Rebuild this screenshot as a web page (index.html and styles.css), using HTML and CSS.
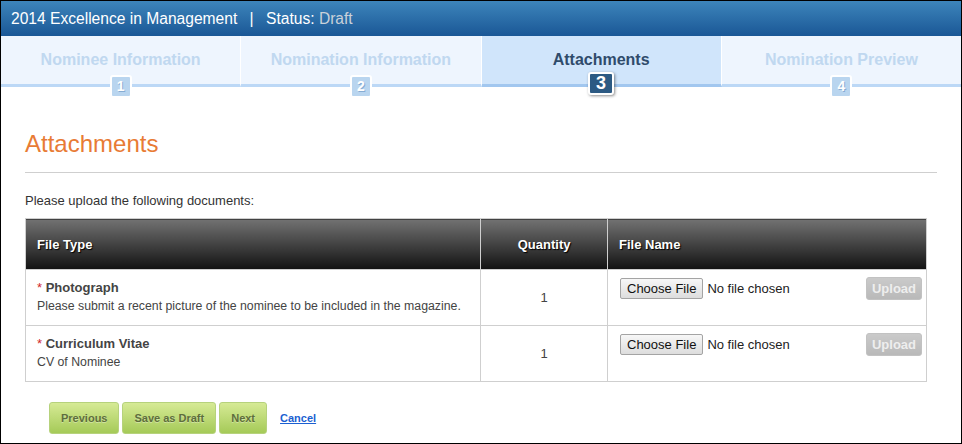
FILE: index.html
```html
<!DOCTYPE html>
<html>
  <head>
    <meta charset="utf-8" />
    <title>2014 Excellence in Management - Attachments</title>
    <link rel="stylesheet" href="styles.css">
  </head>
  <body>
    <div class="page">
      <div class="topbar">
        2014 Excellence in Management <span class="sep">|</span> Status: <span class="draft">Draft</span>
      </div>
      <div class="steps">
        <div class="step">Nominee Information<span class="num">1</span></div>
        <div class="step">Nomination Information<span class="num">2</span></div>
        <div class="step active">Attachments<span class="num">3</span></div>
        <div class="step">Nomination Preview<span class="num">4</span></div>
      </div>
      <div class="content">
        <h1>Attachments</h1>
        <p class="intro">Please upload the following documents:</p>
        <table class="files">
          <tr class="head">
            <th class="col-type">File Type</th>
            <th class="col-qty">Quantity</th>
            <th class="col-name">File Name</th>
          </tr>
          <tr>
            <td class="col-type">
              <div class="doc"><span class="req">*</span> Photograph</div>
              <div class="desc">Please submit a recent picture of the nominee to be included in the magazine.</div>
            </td>
            <td class="col-qty">1</td>
            <td class="col-name">
              <div class="upload-row">
                <input type="file" />
                <button class="upload" disabled>Upload</button>
              </div>
            </td>
          </tr>
          <tr>
            <td class="col-type">
              <div class="doc"><span class="req">*</span> Curriculum Vitae</div>
              <div class="desc">CV of Nominee</div>
            </td>
            <td class="col-qty">1</td>
            <td class="col-name">
              <div class="upload-row">
                <input type="file" />
                <button class="upload" disabled>Upload</button>
              </div>
            </td>
          </tr>
        </table>
        <div class="actions">
          <button class="btn">Previous</button>
          <button class="btn">Save as Draft</button>
          <button class="btn">Next</button>
          <a href="#" class="cancel">Cancel</a>
        </div>
      </div>
    </div>
  </body>
</html>
```

FILE: styles.css
```css
body {
  margin: 0;
  font-family: "Liberation Sans", Arial, sans-serif;
  background: #fff;
}
.page {
  width: 962px;
  height: 444px;
  box-sizing: border-box;
  border: 1px solid #000;
  overflow: hidden;
}
.topbar {
  height: 35px;
  line-height: 35px;
  padding-left: 10px;
  color: #fff;
  font-size: 15.6px;
  background: linear-gradient(#3d85bb, #1a5796);
}
.topbar .sep {
  margin: 0 8px;
}
.topbar .draft {
  color: #c9d1da;
}
.steps {
  display: flex;
}
.step {
  position: relative;
  flex: 1;
  height: 34px;
  padding-top: 14px;
  text-align: center;
  font-size: 16px;
  font-weight: bold;
  line-height: 20px;
  color: #c0d8f0;
  background: #eef5fe;
  border-right: 1px solid #fff;
  border-bottom: 3px solid #bcd8f6;
}
.step:last-child {
  border-right: none;
}
.step.active {
  color: #2f4b6b;
  background: #d0e5fb;
  border-bottom-color: #a2c7ef;
}
.num {
  position: absolute;
  top: 39px;
  left: 50%;
  margin-left: -11px;
  width: 18px;
  height: 19px;
  border: 2px solid #fff;
  border-radius: 3px;
  background: #b9d5ef;
  color: #fff;
  font-size: 14px;
  line-height: 19px;
  text-shadow: 1px 1px 0 #86acd3;
}
.step.active .num {
  top: 36px;
  margin-left: -13px;
  width: 22px;
  background: #2c5a83;
  font-size: 18px;
  text-shadow: none;
  box-shadow: 1px 1px 3px rgba(0, 0, 0, 0.45);
}
.content {
  padding: 0 24px;
}
h1 {
  margin: 43px 0 0;
  padding-bottom: 14px;
  border-bottom: 1px solid #cfcfcf;
  font-size: 24px;
  line-height: 28px;
  font-weight: normal;
  color: #e87b35;
}
.intro {
  margin: 20px 0 10px;
  font-size: 13px;
  line-height: 15px;
  color: #333;
}
.files {
  width: 902px;
  border-collapse: collapse;
  font-size: 13px;
  color: #444;
}
.files tr {
  height: 56px;
}
.files tr.head {
  height: 51px;
}
.files th {
  padding: 0 11px;
  text-align: left;
  color: #fff;
  font-weight: bold;
  text-shadow: 1px 1px 1px #000;
  background: linear-gradient(#727272, #121212);
  border: 1px solid #cfcfcf;
  border-bottom: none;
}
.files td {
  padding: 0 11px;
  border: 1px solid #cfcfcf;
  vertical-align: top;
}
.files th.col-qty,
.files td.col-qty {
  text-align: center;
  vertical-align: middle;
}
.col-type {
  width: 434px;
}
.col-qty {
  width: 104px;
}
.doc {
  margin-top: 10px;
  font-weight: bold;
  line-height: 16px;
}
.req {
  color: #d0272b;
  font-weight: normal;
}
.desc {
  margin-top: 2px;
  font-size: 12.3px;
  line-height: 16px;
}
.files td.col-name {
  padding: 7px 4px 0 12px;
}
.upload-row {
  display: flex;
  justify-content: space-between;
  align-items: flex-start;
}
input[type="file"] {
  margin-top: 1px;
  font-family: "Liberation Sans", Arial, sans-serif;
  font-size: 13px;
  color: #222;
}
input[type="file"]::file-selector-button {
  font-family: "Liberation Sans", Arial, sans-serif;
  font-size: 13px;
  height: 21px;
  padding: 0 6px;
  margin-right: 4px;
  color: #111;
  background: linear-gradient(#f7f7f7, #dddddd);
  border: 1px solid #a4a4a4;
  border-radius: 2px;
}
.upload {
  width: 56px;
  height: 23px;
  padding: 0;
  font-family: "Liberation Sans", Arial, sans-serif;
  font-size: 13px;
  font-weight: bold;
  color: #eee;
  background: linear-gradient(#cacaca, #b9b9b9);
  border: 1px solid #c2c2c2;
  border-radius: 3px;
}
.actions {
  display: flex;
  align-items: center;
  gap: 3px;
  margin-top: 20px;
  padding-left: 24px;
}
.btn {
  height: 32px;
  padding: 0 11px;
  font-family: "Liberation Sans", Arial, sans-serif;
  font-size: 11px;
  font-weight: bold;
  color: #5e6e3c;
  text-shadow: 0 1px 0 rgba(255, 255, 255, 0.35);
  background: linear-gradient(#d6ea95, #a5ca58);
  border: 1px solid #b6d27c;
  border-radius: 3px;
}
.cancel {
  margin-left: 10px;
  font-size: 11px;
  font-weight: bold;
  color: #1b5fd1;
}
```
